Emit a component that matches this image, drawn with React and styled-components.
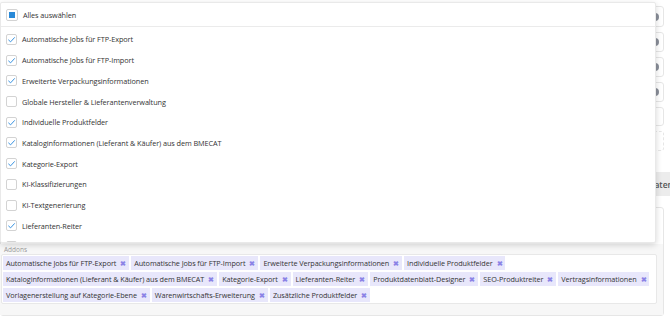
import React from "react";
import styled, { createGlobalStyle } from "styled-components";

const Global = createGlobalStyle`
  html, body { margin: 0; padding: 0; background: #ffffff; }
  body { font-family: "Open Sans", "Noto Sans", sans-serif; color: #333; }
  #root { width: 670px; height: 319px; overflow: hidden; }
`;

const Page = styled.div`
  position: relative;
  width: 670px;
  height: 319px;
  display: flex;
  flex-direction: column;
  background: #fff;
  overflow: hidden;
`;

const FieldStack = styled.div`
  display: flex;
  flex-direction: column;
  gap: 5px;
  padding: 6px 6px 0 0;
`;

const FieldRow = styled.div`
  height: ${(p) => p.$h || 21}px;
  margin-left: 300px;
  border: 1px ${(p) => (p.$dashed ? "dashed" : "solid")} #e6e6e6;
  border-radius: 3px;
  display: flex;
  align-items: center;
  justify-content: flex-end;
  padding-right: 4px;
  box-sizing: border-box;
`;

const RoundIcon = styled.span`
  width: 8px;
  height: 8px;
  border-radius: 50%;
  background: #8a8f99;
`;

const TabBar = styled.div`
  margin-top: 21px;
  height: 24px;
  background: #ececec;
  display: flex;
  justify-content: flex-end;
  align-items: center;
  overflow: hidden;
`;

const Tab = styled.span`
  font-size: 8.5px;
  font-weight: 600;
  color: #555;
  white-space: nowrap;
  margin-right: -3px;
`;

const Panel = styled.div`
  margin: 11px 6px 0 0;
  height: 109px;
  border: 1px solid #e6e6e6;
  border-radius: 3px;
  background: #fff;
  display: flex;
  flex-direction: column;
  box-sizing: border-box;
`;

const PanelTop = styled.div`
  height: 36px;
  flex: none;
`;

const AddonSection = styled.div`
  flex: 1;
  background: #f7f7f7;
  padding: 1px 6px 0 1px;
  display: flex;
  flex-direction: column;
  margin-left: -1px;
`;

const Label = styled.div`
  font-size: 6.5px;
  color: #999;
  padding-left: 3px;
  height: 9px;
  line-height: 9px;
`;

const TagBox = styled.div`
  background: #fff;
  border: 1px solid #e8e8e8;
  border-radius: 2px;
  display: flex;
  flex-wrap: wrap;
  gap: 2px;
  padding: 1px 0 1px 1px;
  width: 656px;
  box-sizing: border-box;
`;

const Tag = styled.span`
  height: 14px;
  background: #e8e7fb;
  display: inline-flex;
  align-items: center;
  gap: 4px;
  padding: 0 3px;
  font-size: 7.25px;
  letter-spacing: -0.08px;
  color: #333;
  white-space: nowrap;
`;

const TagX = styled.span`
  color: #8c84e6;
  font-size: 7px;
  font-weight: 700;
  line-height: 1;
`;

const Popover = styled.div`
  position: absolute;
  left: 0;
  top: 2px;
  width: 656px;
  height: 241px;
  background: #fff;
  border: 1px solid #e9e9e9;
  border-radius: 2px;
  box-shadow: 0 2px 6px rgba(0, 0, 0, 0.16);
  box-sizing: border-box;
  display: flex;
  flex-direction: column;
  overflow: hidden;
  z-index: 5;
`;

const Header = styled.div`
  height: 23px;
  flex: none;
  display: flex;
  align-items: center;
  gap: 5px;
  padding-left: 5px;
  border-bottom: 1px solid #ebebeb;
`;

const List = styled.div`
  flex: 1;
  overflow: hidden;
  padding-top: 2px;
`;

const Item = styled.div`
  height: 20.72px;
  display: flex;
  align-items: center;
  gap: 5px;
  padding-left: 5px;
`;

const Box = styled.span`
  width: ${(p) => (p.$big ? 12 : 11)}px;
  height: ${(p) => (p.$big ? 12 : 11)}px;
  flex: none;
  border: 1px solid #d3d3d3;
  border-radius: 2px;
  box-sizing: border-box;
  display: flex;
  align-items: center;
  justify-content: center;
  background: #fff;
`;

const Indeterminate = styled.span`
  width: 6px;
  height: 6px;
  background: #2a8ad8;
`;

const ItemText = styled.span`
  font-size: 7.3px;
  letter-spacing: -0.08px;
  color: #333;
  white-space: nowrap;
`;

const Check = () => (
  <svg width="9" height="9" viewBox="0 0 10 10">
    <path d="M1.5 5.3 L4 7.6 L8.6 2.6" fill="none" stroke="#3590e0" strokeWidth="1.1" />
  </svg>
);

const addons = [
  ["Automatische Jobs für FTP-Export", true],
  ["Automatische Jobs für FTP-Import", true],
  ["Erweiterte Verpackungsinformationen", true],
  ["Globale Hersteller & Lieferantenverwaltung", false],
  ["Individuelle Produktfelder", true],
  ["Kataloginformationen (Lieferant & Käufer) aus dem BMECAT", true],
  ["Kategorie-Export", true],
  ["KI-Klassifizierungen", false],
  ["KI-Textgenerierung", false],
  ["Lieferanten-Reiter", true],
  ["Produktdatenblatt-Designer", true],
  ["SEO-Produktreiter", true],
  ["Vertragsinformationen", true],
  ["Vorlagenerstellung auf Kategorie-Ebene", true],
  ["Warenwirtschafts-Erweiterung", true],
  ["Zusätzliche Produktfelder", true],
];

export default function App() {
  const selected = addons.filter((a) => a[1]).map((a) => a[0]);
  return (
    <Page>
      <Global />
      <FieldStack>
        <FieldRow $h={21}><RoundIcon /></FieldRow>
        <FieldRow $h={20}><RoundIcon /></FieldRow>
        <FieldRow $h={20}><RoundIcon /></FieldRow>
        <FieldRow $h={20}><RoundIcon /></FieldRow>
        <FieldRow $h={19} />
        <FieldRow $h={20} $dashed />
      </FieldStack>
      <TabBar>
        <Tab>Lieferantendaten</Tab>
      </TabBar>
      <Panel>
        <PanelTop />
        <AddonSection>
          <Label>Addons</Label>
          <TagBox>
            {selected.map((s) => (
              <Tag key={s}>
                {s}
                <TagX>✖</TagX>
              </Tag>
            ))}
          </TagBox>
        </AddonSection>
      </Panel>
      <Popover>
        <Header>
          <Box $big>
            <Indeterminate />
          </Box>
          <ItemText>Alles auswählen</ItemText>
        </Header>
        <List>
          {addons.map(([name, on]) => (
            <Item key={name}>
              <Box>{on && <Check />}</Box>
              <ItemText>{name}</ItemText>
            </Item>
          ))}
        </List>
      </Popover>
    </Page>
  );
}
